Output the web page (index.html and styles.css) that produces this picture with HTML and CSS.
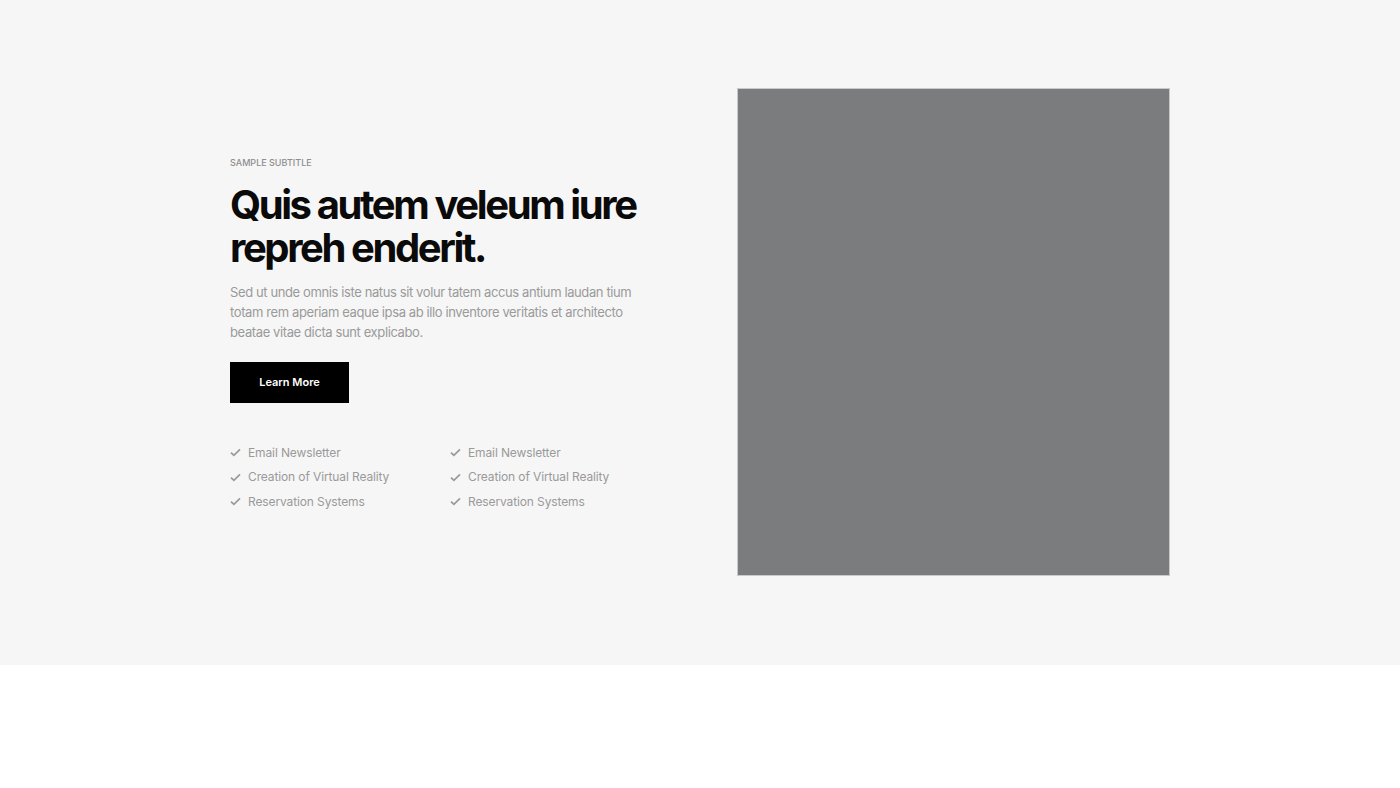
FILE: index.html
```html
<!DOCTYPE html>
<html lang="en">
<head>
<meta charset="utf-8">
<title>Feature</title>
<link rel="stylesheet" href="styles.css">
</head>
<body>
<section class="hero">
  <div class="container">
    <div class="content">
      <p class="subtitle">Sample Subtitle</p>
      <h1 class="title">Quis autem veleum iure repreh enderit.</h1>
      <p class="lead">Sed ut unde omnis iste natus sit volur tatem accus antium laudan tium totam rem aperiam eaque ipsa ab illo inventore veritatis et architecto beatae vitae dicta sunt explicabo.</p>
      <a class="btn" href="#">Learn More</a>
      <div class="features">
        <ul class="list">
          <li><svg class="check" viewBox="0 0 12 10"><path d="M1 5.2 4.2 8.2 11 1.6" fill="none" stroke="currentColor" stroke-width="2"/></svg>Email Newsletter</li>
          <li><svg class="check" viewBox="0 0 12 10"><path d="M1 5.2 4.2 8.2 11 1.6" fill="none" stroke="currentColor" stroke-width="2"/></svg>Creation of Virtual Reality</li>
          <li><svg class="check" viewBox="0 0 12 10"><path d="M1 5.2 4.2 8.2 11 1.6" fill="none" stroke="currentColor" stroke-width="2"/></svg>Reservation Systems</li>
        </ul>
        <ul class="list">
          <li><svg class="check" viewBox="0 0 12 10"><path d="M1 5.2 4.2 8.2 11 1.6" fill="none" stroke="currentColor" stroke-width="2"/></svg>Email Newsletter</li>
          <li><svg class="check" viewBox="0 0 12 10"><path d="M1 5.2 4.2 8.2 11 1.6" fill="none" stroke="currentColor" stroke-width="2"/></svg>Creation of Virtual Reality</li>
          <li><svg class="check" viewBox="0 0 12 10"><path d="M1 5.2 4.2 8.2 11 1.6" fill="none" stroke="currentColor" stroke-width="2"/></svg>Reservation Systems</li>
        </ul>
      </div>
    </div>
    <div class="media"></div>
  </div>
</section>
</body>
</html>
```
FILE: styles.css
```css
* { box-sizing: border-box; }
html, body { margin: 0; padding: 0; background: #ffffff; }
body { font-family: Inter, "Noto Sans", sans-serif; }

.hero {
  background: #f6f6f6;
  padding: 88px 0 89px;
}
.container {
  width: 940px;
  margin: 0 auto;
  display: grid;
  grid-template-columns: 433px 433px;
  column-gap: 74px;
  align-items: center;
}
.content { padding-top: 4px; }
.subtitle {
  margin: 0 0 15px;
  font-size: 9px;
  text-transform: uppercase;
  color: #8e8e8e;
  font-weight: 500;
}
.title {
  margin: 0;
  font-size: 40px;
  line-height: 43px;
  font-weight: 700;
  letter-spacing: -0.06em;
  color: #0a0a0a;
  width: 450px;
}
.lead {
  margin: 13px 0 20px;
  font-size: 13px;
  line-height: 20px;
  color: #9a9a9a;
  letter-spacing: -0.03em;
  width: 420px;
}
.btn {
  display: inline-flex;
  align-items: center;
  justify-content: center;
  width: 119px;
  height: 41px;
  background: #000;
  color: #fff;
  font-size: 11px;
  font-weight: 600;
  text-decoration: none;
}
.features {
  display: grid;
  grid-template-columns: 220px 220px;
  margin-top: 40px;
}
.list {
  list-style: none;
  margin: 0;
  padding: 0;
  display: flex;
  flex-direction: column;
  gap: 5px;
}
.list li {
  display: flex;
  align-items: center;
  gap: 7px;
  font-size: 12px;
  line-height: 19.5px;
  color: #9a9a9a;
  letter-spacing: -0.01em;
}
.check {
  width: 11px;
  height: 9px;
  color: #9a9a9a;
  flex: none;
}
.media {
  height: 488px;
  background: #7b7c7e;
  border: 1px solid #c9c9c9;
}
```
